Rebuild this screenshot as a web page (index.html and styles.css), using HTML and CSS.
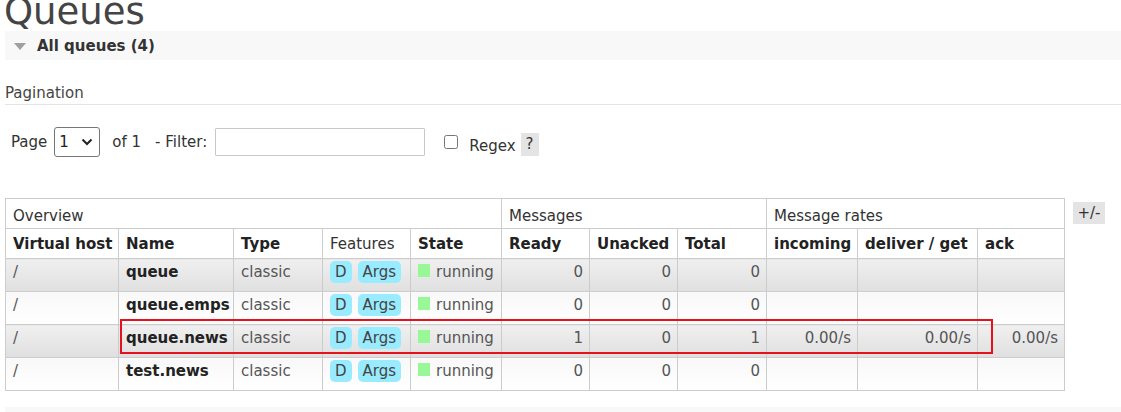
FILE: index.html
```html
<!DOCTYPE html>
<html lang="en">
<head>
<meta charset="utf-8">
<title>Queues</title>
<link rel="stylesheet" href="styles.css">
</head>
<body>
<main class="page">
  <h1 class="title">Queues</h1>
  <section class="section">
    <h2 class="section-head"><span class="tri"></span>All queues (4)</h2>
    <div class="section-body">
      <h3 class="sub">Pagination</h3>
      <form class="pager">
        <label class="lbl lbl-page" for="page">Page</label>
        <span class="select-wrap"><select id="page" class="select"><option>1</option></select><svg class="chev" width="12" height="8" viewBox="0 0 12 8"><path d="M1.5 1.5 L6 6 L10.5 1.5" fill="none" stroke="#222" stroke-width="2"/></svg></span>
        <span class="lbl lbl-of">of 1</span>
        <label class="lbl lbl-filter" for="filter">- Filter:</label>
        <input id="filter" class="filter" type="text">
        <input id="regex" class="check" type="checkbox">
        <label class="lbl lbl-regex" for="regex">Regex</label>
        <span class="help">?</span>
      </form>
      <div class="table-row">
        <table class="list">
          <colgroup>
            <col style="width:113px"><col style="width:115px"><col style="width:89px"><col style="width:88px"><col style="width:91px">
            <col style="width:88px"><col style="width:88px"><col style="width:89px">
            <col style="width:91px"><col style="width:120px"><col style="width:87px">
          </colgroup>
          <thead>
            <tr class="group">
              <th colspan="5">Overview</th>
              <th colspan="3">Messages</th>
              <th colspan="3">Message rates</th>
            </tr>
            <tr class="cols">
              <th>Virtual host</th>
              <th>Name</th>
              <th>Type</th>
              <th class="plain">Features</th>
              <th>State</th>
              <th>Ready</th>
              <th>Unacked</th>
              <th>Total</th>
              <th>incoming</th>
              <th>deliver / get</th>
              <th>ack</th>
            </tr>
          </thead>
          <tbody>
            <tr class="alt1">
              <td>/</td>
              <td class="name">queue</td>
              <td>classic</td>
              <td class="feat"><span class="feats"><span class="badge">D</span><span class="badge">Args</span></span></td>
              <td><span class="dot"></span>running</td>
              <td class="num">0</td>
              <td class="num">0</td>
              <td class="num">0</td>
              <td class="num"></td>
              <td class="num"></td>
              <td class="num"></td>
            </tr>
            <tr class="alt2">
              <td>/</td>
              <td class="name">queue.emps</td>
              <td>classic</td>
              <td class="feat"><span class="feats"><span class="badge">D</span><span class="badge">Args</span></span></td>
              <td><span class="dot"></span>running</td>
              <td class="num">0</td>
              <td class="num">0</td>
              <td class="num">0</td>
              <td class="num"></td>
              <td class="num"></td>
              <td class="num"></td>
            </tr>
            <tr class="alt1">
              <td>/</td>
              <td class="name">queue.news</td>
              <td>classic</td>
              <td class="feat"><span class="feats"><span class="badge">D</span><span class="badge">Args</span></span></td>
              <td><span class="dot"></span>running</td>
              <td class="num">1</td>
              <td class="num">0</td>
              <td class="num">1</td>
              <td class="num">0.00/s</td>
              <td class="num">0.00/s</td>
              <td class="num">0.00/s</td>
            </tr>
            <tr class="alt2">
              <td>/</td>
              <td class="name">test.news</td>
              <td>classic</td>
              <td class="feat"><span class="feats"><span class="badge">D</span><span class="badge">Args</span></span></td>
              <td><span class="dot"></span>running</td>
              <td class="num">0</td>
              <td class="num">0</td>
              <td class="num">0</td>
              <td class="num"></td>
              <td class="num"></td>
              <td class="num"></td>
            </tr>
          </tbody>
        </table>
        <span class="toggle">+/-</span>
      </div>
    </div>
  </section>
  <section class="section">
    <h2 class="section-head section-head-next"><span class="tri"></span>Add a new queue</h2>
  </section>
  <div class="highlight"></div>
</main>
</body>
</html>
```

FILE: styles.css
```css
* { box-sizing: border-box; }
html, body { margin: 0; padding: 0; background: #fff; }
body {
  font-family: "DejaVu Sans", Verdana, sans-serif;
  font-size: 15px;
  color: #444;
  overflow: hidden;
}
.page {
  display: flow-root;
  position: relative;
  padding: 0 0 0 5px;
}
.title {
  font-size: 37px;
  font-weight: normal;
  line-height: 36px;
  margin: -6px 0 1px -1px;
  color: #444;
}
.section-head {
  display: flex;
  align-items: center;
  height: 29px;
  margin: 0;
  padding: 0 0 0 9px;
  background: #f8f8f8;
  font-size: 15px;
  font-weight: bold;
  color: #333;
}
.section-head-next {
  align-items: flex-start;
  padding-top: 12px;
}
.tri {
  width: 0;
  height: 0;
  border-left: 6px solid transparent;
  border-right: 6px solid transparent;
  border-top: 7px solid #a0a0a0;
  margin: 2px 11px 0 0;
}
.sub {
  margin: 24px 0 0;
  padding: 0 0 2px;
  font-size: 15px;
  font-weight: normal;
  color: #444;
  border-bottom: 1px solid #e4e4e4;
}
.pager {
  display: flex;
  align-items: center;
  height: 30px;
  margin: 22px 0 0;
  padding-left: 6px;
  color: #333;
}
.lbl { white-space: nowrap; }
.select-wrap {
  display: inline-flex;
  align-items: center;
  width: 46px;
  height: 30px;
  margin-left: 7px;
  border: 1px solid #767676;
  border-radius: 3px;
  background: #fff;
}
.select {
  appearance: none;
  -webkit-appearance: none;
  border: 0;
  background: transparent;
  font: inherit;
  color: #222;
  width: 26px;
  height: 28px;
  padding: 0 0 0 4px;
  outline: none;
}
.chev { display: block; }
.lbl-of { margin-left: 12px; }
.lbl-filter { margin-left: 14px; }
.filter {
  width: 210px;
  height: 28px;
  margin: 0 0 0 8px;
  padding: 0 4px;
  border: 1px solid #c8c8c8;
  border-radius: 1px;
  font: inherit;
}
.check {
  width: 14px;
  height: 14px;
  margin: 0 0 0 19px;
}
.lbl-regex { margin: 8px 0 0 11px; }
.help {
  margin: 4px 0 0 5px;
  padding: 0 5px;
  height: 23px;
  line-height: 23px;
  background: #e4e4e4;
  color: #333;
}
.table-row {
  display: flex;
  align-items: flex-start;
  margin-top: 41px;
}
.list {
  border-collapse: collapse;
  table-layout: fixed;
  width: 1059px;
  margin-bottom: 16px;
  flex: none;
}
.list th, .list td {
  border: 1px solid #ccc;
  padding: 0 7px;
  text-align: left;
  vertical-align: top;
  white-space: nowrap;
  overflow: hidden;
}
.list thead th {
  background: #fff;
  color: #222;
  font-weight: bold;
  height: 30px;
  padding-top: 6px;
}
.list thead tr.group th {
  font-weight: normal;
  color: #333;
  padding-top: 8px;
}
.list thead th.plain { font-weight: normal; color: #333; }
.list td {
  height: 33px;
  padding-top: 4px;
  color: #555;
}
.list td.name { font-weight: bold; color: #222; }
.list td.num { text-align: right; padding-right: 6px; }
.list td.feat { padding-top: 2px; }
.list tr.alt1 > td { background: linear-gradient(#f0f0f0, #e0e0e0); }
.list tr.alt2 > td { background: linear-gradient(#f8f8f8, #ffffff); }
.feats {
  display: inline-flex;
  gap: 6px;
  vertical-align: top;
}
.badge {
  display: inline-block;
  padding: 2px 5px;
  line-height: 18px;
  border-radius: 5px;
  background: #99ebff;
  color: #444;
}
.dot {
  display: inline-block;
  width: 12px;
  height: 13px;
  margin-right: 6px;
  background: #98f898;
}
.toggle {
  flex: none;
  margin: 4px 0 0 8px;
  width: 32px;
  height: 22px;
  line-height: 22px;
  text-align: center;
  background: #e4e4e4;
  color: #333;
}
.highlight {
  position: absolute;
  left: 120px;
  top: 319px;
  width: 873px;
  height: 35px;
  border: 2px solid #e5121c;
  pointer-events: none;
}
```
